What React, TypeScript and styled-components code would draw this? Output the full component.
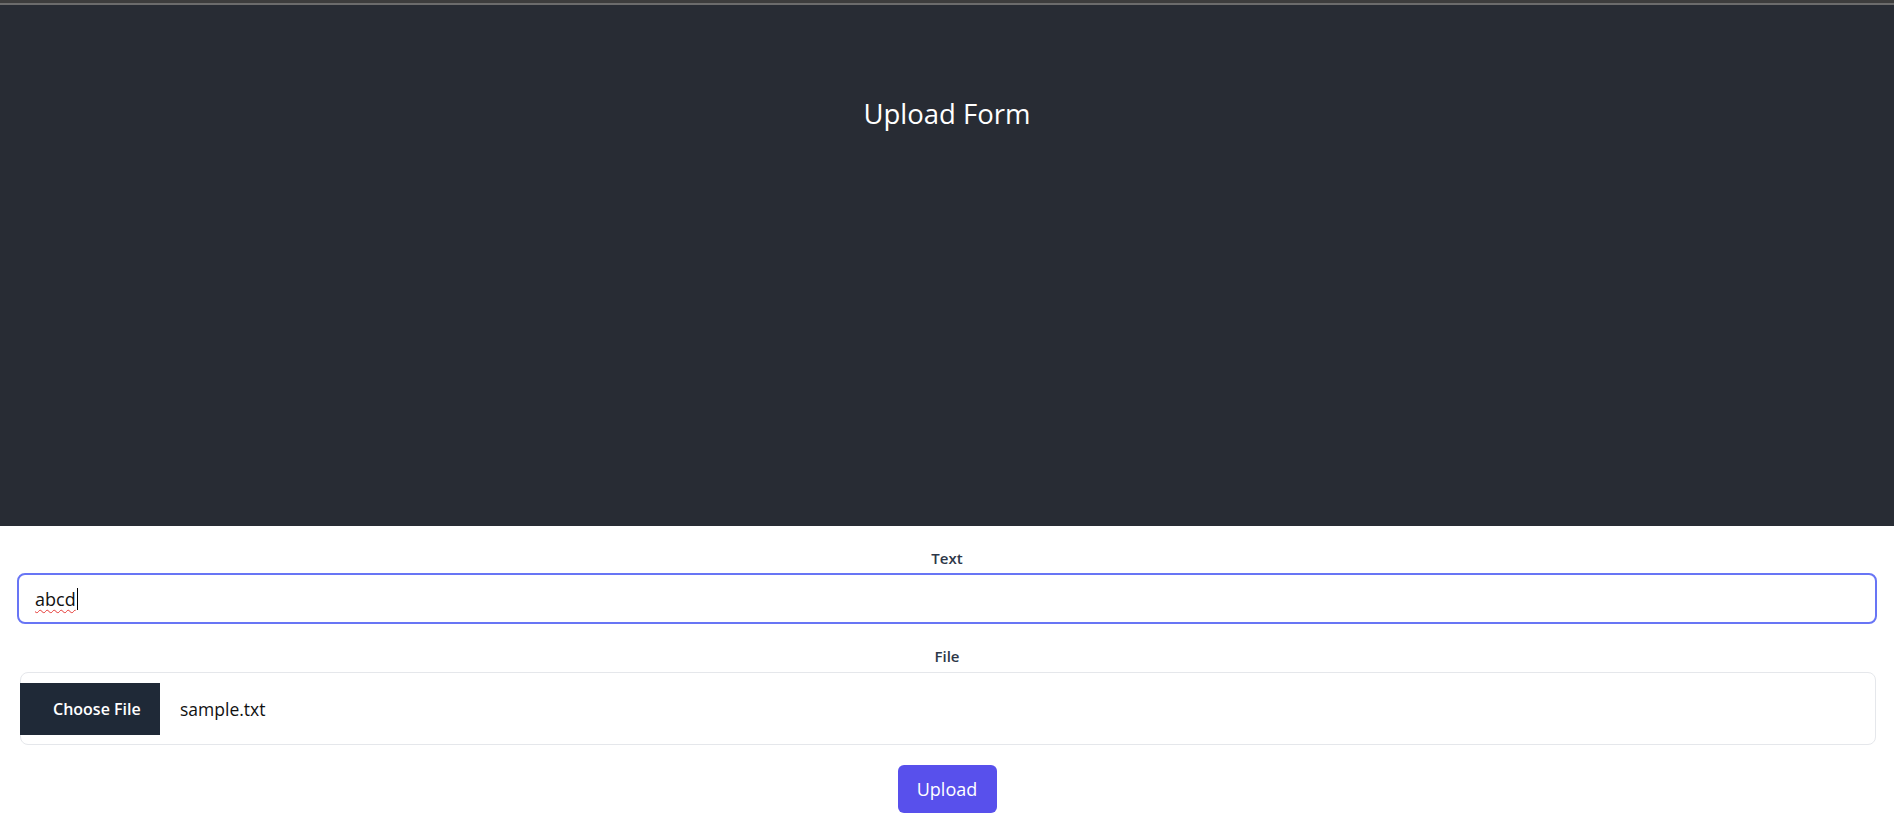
import React from "react";
import styled, { createGlobalStyle } from "styled-components";

const GlobalStyle = createGlobalStyle`
  html, body { margin: 0; padding: 0; background: #ffffff; }
  body { font-family: "Open Sans", "Noto Sans", "Liberation Sans", sans-serif; }
  * { box-sizing: border-box; }
`;

const TopStrip = styled.div`
  height: 5px;
  border-top: 3px solid #3d3d3d;
  background: #6c6c6c;
`;

const Header = styled.header`
  height: 521px;
  background: #282c34;
  color: #ffffff;
  display: flex;
  justify-content: center;
  padding-top: 95px;
`;

const Title = styled.h1`
  margin: 0;
  font-size: 27.5px;
  line-height: 28px;
  font-weight: 400;
`;

const Form = styled.form`
  display: flex;
  flex-direction: column;
  align-items: stretch;
  padding: 0 17px;
`;

const Label = styled.label<{ $top: number }>`
  display: block;
  margin-top: ${(p) => p.$top}px;
  height: 20px;
  line-height: 20px;
  text-align: center;
  font-size: 15px;
  font-weight: 600;
  color: #2d3748;
`;

const TextBox = styled.div`
  margin-top: 5px;
  height: 51px;
  border: 2px solid #6875f5;
  border-radius: 8px;
  padding: 0 16px;
  display: flex;
  align-items: center;
  font-size: 18px;
  color: #111111;
`;

const Typed = styled.span`
  text-decoration: underline wavy #e53935;
  text-decoration-thickness: 1px;
  text-underline-offset: 3px;
`;

const Caret = styled.span`
  display: inline-block;
  width: 1px;
  height: 22px;
  background: #000;
  margin-left: 1px;
`;

const FileBox = styled.div`
  margin: 6px 1px 0 3px;
  height: 73px;
  border: 1px solid #e5e7eb;
  border-radius: 8px;
  display: flex;
  align-items: center;
`;

const ChooseButton = styled.span`
  width: 140px;
  height: 52px;
  margin-left: -1px;
  background: #1f2937;
  color: #ffffff;
  font-size: 16px;
  font-weight: 600;
  display: flex;
  align-items: center;
  padding-left: 33px;
  white-space: nowrap;
`;

const FileName = styled.span`
  margin-left: 20px;
  font-size: 17.5px;
  color: #111111;
`;

const SubmitRow = styled.div`
  display: flex;
  justify-content: center;
  margin-top: 20px;
`;

const SubmitButton = styled.button`
  width: 99px;
  height: 48px;
  border: none;
  border-radius: 6px;
  background: #5850ec;
  color: #ffffff;
  font-family: inherit;
  font-size: 18px;
  cursor: pointer;
`;

export default function App() {
  return (
    <>
      <GlobalStyle />
      <TopStrip />
      <Header>
        <Title>Upload Form</Title>
      </Header>
      <Form onSubmit={(e) => e.preventDefault()}>
        <Label $top={22}>Text</Label>
        <TextBox role="textbox">
          <Typed>abcd</Typed>
          <Caret />
        </TextBox>
        <Label $top={22}>File</Label>
        <FileBox>
          <ChooseButton>Choose File</ChooseButton>
          <FileName>sample.txt</FileName>
        </FileBox>
        <SubmitRow>
          <SubmitButton type="submit">Upload</SubmitButton>
        </SubmitRow>
      </Form>
    </>
  );
}
